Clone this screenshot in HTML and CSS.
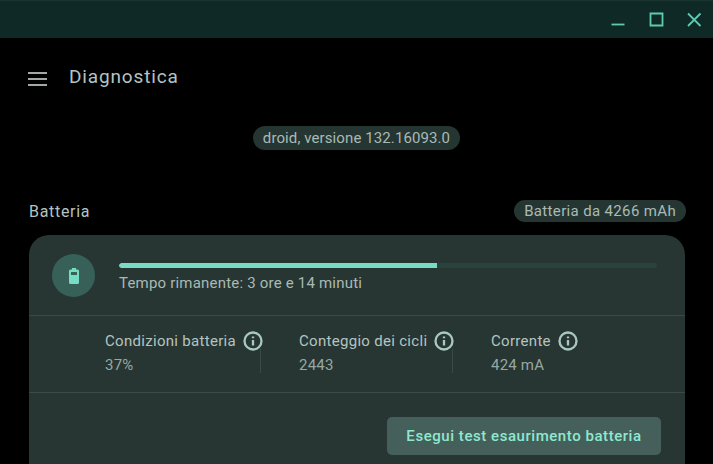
FILE: index.html
```html
<!DOCTYPE html>
<html lang="it">
<head>
    <meta charset="UTF-8">
    <meta name="viewport" content="width=device-width, initial-scale=1.0">
    <title>Diagnostica</title>
    <link rel="stylesheet" href="styles.css">
</head>
<body>
    <div class="titlebar">
        <svg class="win-icon" width="16" height="16" viewBox="0 0 16 16"><path d="M1.5 12.500h13" /></svg>
        <svg class="win-icon" width="16" height="16" viewBox="0 0 16 16"><path d="M2.500 1.500h12v12h-12z" /></svg>
        <svg class="win-icon" width="16" height="16" viewBox="0 0 16 16"><path d="M2 1.500l12.500 12.500M14.500 1.500L2 14" /></svg>
    </div>

    <div class="header">
        <svg class="menu-icon" width="19" height="14" viewBox="0 0 19 14"><path d="M0 1h19M0 7h19M0 13h19" /></svg>
        <h1>Diagnostica</h1>
    </div>

    <div class="version-row">
        <span class="pill">droid, versione 132.16093.0</span>
    </div>

    <div class="section-head">
        <h2>Batteria</h2>
        <span class="pill pill-capacity">Batteria da 4266 mAh</span>
    </div>

    <div class="card">
        <div class="card-top">
            <div class="battery-badge">
                <svg width="10" height="16" viewBox="0 0 10 16"><path fill-rule="evenodd" d="M3 0h4v1.500h1.500A1.500 1.500 0 0 1 10 3v11.500a1.500 1.500 0 0 1-1.500 1.500h-7A1.500 1.500 0 0 1 0 14.500V3a1.500 1.500 0 0 1 1.500-1.500H3zM2 4v3h6V4z" /></svg>
            </div>
            <div class="charge">
                <div class="track"><div class="fill" style="width: 59.1%"></div></div>
                <p>Tempo rimanente: 3 ore e 14 minuti</p>
            </div>
        </div>

        <div class="stats">
            <div class="stat stat-health">
                <div class="stat-label">Condizioni batteria
                    <svg class="info" width="20" height="20" viewBox="0 0 20 20"><circle cx="10" cy="10" r="8.500" /><path d="M10 9v5.500M10 5.500v1.800" /></svg>
                </div>
                <div class="stat-value">37%</div>
            </div>
            <div class="stat stat-cycles">
                <div class="stat-label">Conteggio dei cicli
                    <svg class="info" width="20" height="20" viewBox="0 0 20 20"><circle cx="10" cy="10" r="8.500" /><path d="M10 9v5.500M10 5.500v1.800" /></svg>
                </div>
                <div class="stat-value">2443</div>
            </div>
            <div class="stat stat-current">
                <div class="stat-label">Corrente
                    <svg class="info" width="20" height="20" viewBox="0 0 20 20"><circle cx="10" cy="10" r="8.500" /><path d="M10 9v5.500M10 5.500v1.800" /></svg>
                </div>
                <div class="stat-value">424 mA</div>
            </div>
        </div>

        <div class="actions">
            <button>Esegui test esaurimento batteria</button>
        </div>
    </div>
</body>
</html>
```

FILE: styles.css
```css
html, body {
    height: 464px;
    overflow: hidden;
}
body {
    margin: 0;
    background: #000;
    color: #a9bab5;
    font-family: Roboto, "Liberation Sans", sans-serif;
    font-size: 15px;
}
.titlebar {
    height: 38px;
    box-sizing: border-box;
    padding: 0 11px 0 0;
    background: #0f2a26;
    border-top: 1px solid #1a3530;
    display: flex;
    align-items: center;
    justify-content: flex-end;
    gap: 22px;
}
.win-icon {
    fill: none;
    stroke: #5fc9b2;
    stroke-width: 1.800;
}
.header {
    height: 78px;
    display: flex;
    align-items: center;
    padding-left: 28px;
}
.menu-icon {
    fill: none;
    stroke: #a2a8a8;
    stroke-width: 2.200;
    margin: 4px 22px 0 0;
}
h1 {
    margin: 0 0 1px;
    font-size: 19px;
    font-weight: 400;
    letter-spacing: 0.85px;
    color: #b4c4c0;
}
.version-row {
    display: flex;
    justify-content: center;
    margin-top: 10px;
}
.pill {
    background: #253632;
    border-radius: 12px;
    padding: 0 10px;
    line-height: 24px;
    letter-spacing: 0.1px;
    color: #a9bab5;
}
.pill-capacity {
    line-height: 22px;
    letter-spacing: 0.35px;
}
.section-head {
    display: flex;
    justify-content: space-between;
    align-items: center;
    margin: 50px 27px 13px 29px;
}
h2 {
    margin: 0;
    font-size: 16px;
    font-weight: 400;
    letter-spacing: 0.7px;
    color: #b4c4c0;
}
.card {
    margin: 0 28px 0 29px;
    background: #273633;
    border-radius: 20px 20px 0 0;
}
.card-top {
    height: 81px;
    box-sizing: border-box;
    padding: 19px 28px 0 23px;
    display: flex;
    border-bottom: 1px solid #3a4b47;
}
.battery-badge {
    width: 43px;
    height: 43px;
    border-radius: 50%;
    background: #376059;
    display: flex;
    align-items: center;
    justify-content: center;
    margin-right: 24px;
}
.battery-badge svg {
    fill: #77dcc3;
}
.charge {
    flex: 1;
    padding-top: 9px;
}
.track {
    height: 5px;
    border-radius: 3px;
    background: #2a423d;
    overflow: hidden;
}
.fill {
    height: 100%;
    background: #77dcc3;
    border-radius: 3px 0 0 3px;
}
.charge p {
    margin: 6px 0 0;
    letter-spacing: 0.2px;
    color: #a9bab5;
}
.stats {
    height: 77px;
    box-sizing: border-box;
    padding: 15px 0 0 76px;
    display: flex;
    border-bottom: 1px solid #3a4b47;
}
.stat-health {
    width: 156px;
    margin-right: 38px;
}
.stat-cycles {
    width: 154px;
    margin-right: 38px;
}
.stat-label {
    display: flex;
    align-items: center;
    gap: 7px;
    white-space: nowrap;
    height: 20px;
    letter-spacing: 0.3px;
    color: #b4c4c0;
}
.stat-value {
    box-sizing: border-box;
    height: 24px;
    margin-top: -2px;
    padding-top: 7px;
    line-height: 19px;
    letter-spacing: 0.2px;
    color: #97a8a3;
}
.stat-health .stat-value, .stat-cycles .stat-value {
    border-right: 1px solid #3a4b47;
}
.info {
    fill: none;
    stroke: #a9c8c0;
    stroke-width: 2.300;
    flex: none;
}
.actions {
    display: flex;
    justify-content: flex-end;
    padding: 24px 24px 12px 0;
}
button {
    width: 274px;
    height: 38px;
    border: none;
    border-radius: 5px;
    background: #45605a;
    color: #8fe8d0;
    font-family: inherit;
    font-size: 15px;
    font-weight: 500;
    letter-spacing: 0.55px;
    cursor: pointer;
}
```
